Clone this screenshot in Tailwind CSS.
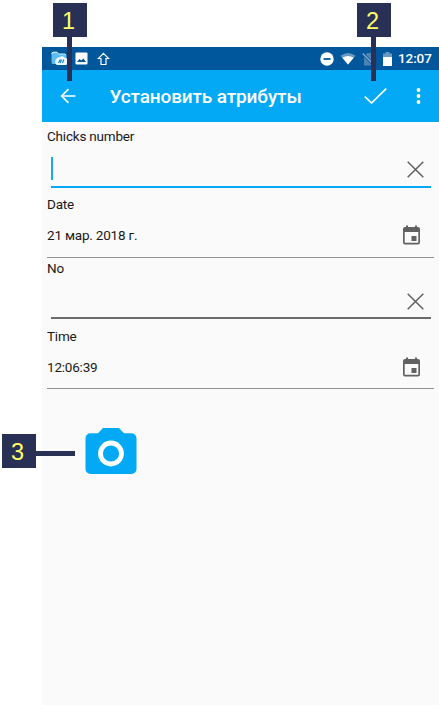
<!DOCTYPE html>
<html lang="ru">
<head>
<meta charset="utf-8">
<title>Установить атрибуты</title>
<script src="https://cdn.jsdelivr.net/npm/@tailwindcss/browser@4"></script>
</head>
<body class="relative h-[705px] w-[439px] overflow-hidden bg-white pt-[47px] pl-[42px] font-['Roboto',sans-serif]">
<div class="flex h-[658px] flex-col bg-[#fafafa]">
  <!-- Status bar -->
  <div class="flex h-[23px] items-center bg-[#01579b] pr-[7px] pl-[9px] text-white">
    <svg class="h-[15px] w-[17px]" viewBox="0 0 17 15"><path d="M2 1h4l1.500 2H14a1.500 1.500 0 0 1 1.500 1.500V13H2A1.500 1.500 0 0 1 .5 11.500v-9A1.500 1.500 0 0 1 2 1z" fill="#5ebcf5"/><path d="M1 3V2l1-.8h4L7.500 3H14l1 1" fill="none" stroke="#d8effc"/><path d="M6 14a3.500 3.500 0 0 1-1-5.500 3 3 0 0 1 3.500-2 3.500 3.500 0 0 1 5 0A4 4 0 0 1 15 14z" fill="#f0f8ff"/><path d="M7.500 12 9 9h1.300L9.300 12M11.500 12l1.300-3.500" fill="none" stroke="#1689d6" stroke-width="1.200"/></svg>
    <svg class="ml-[7px] h-[13px] w-[13px]" viewBox="0 0 13 13"><rect x=".5" y=".5" width="12" height="12" rx="1" fill="#fff"/><path d="M2 10l2.500-3 1.800 1.500 2.200-2L11 10z" fill="#01579b"/></svg>
    <svg class="ml-[9px] h-[14px] w-[13px]" viewBox="0 0 13 14"><path d="M6.500 1.300 11.700 6.500H9v6H4v-6H1.300z" fill="none" stroke="#fff" stroke-width="1.200"/></svg>
    <div class="ml-auto flex items-center">
      <svg class="h-[14px] w-[14px]" viewBox="0 0 14 14"><circle cx="7" cy="7" r="6.700" fill="#fff"/><path d="M3.500 7h7" stroke="#01579b" stroke-width="1.800"/></svg>
      <svg class="ml-[6px] h-[13px] w-[16px]" viewBox="0 0 17 13"><path d="M.5 3.500Q8.500-2 16.500 3.500L8.500 13z" fill="#6798c3"/><path d="M2.500 5.800Q8.500 2 14.500 5.800L8.500 13z" fill="#fff"/></svg>
      <svg class="ml-[6px] h-[14px] w-[13px]" viewBox="0 0 13 14"><path d="M5 1h7v10L4 3zM2 5l8.500 8.500H2z" fill="#4d82b2"/><path d="M.7 1.500 12 13" stroke="#8cb0d0" stroke-width="1.200"/></svg>
      <svg class="ml-[8px] h-[14px] w-[9px]" viewBox="0 0 9 14"><path d="M0 1.500h2.500V0h4v1.500H9V6H0z" fill="#6798c3"/><path d="M0 5h9v9H0z" fill="#fff"/></svg>
      <span class="ml-[6px] w-[34px] text-[13.500px] leading-[23px] font-medium tracking-[-0.1px] whitespace-nowrap">12:07</span>
    </div>
  </div>
  <!-- App bar -->
  <div class="flex h-[52px] items-center bg-[#03a9f4] text-white">
    <svg class="ml-[18px] h-4 w-4" viewBox="0 0 16 16" fill="none" stroke="#fff" stroke-width="1.700"><path d="M15.500 8H2M8.500 1.200 1.700 8l6.800 6.800"/></svg>
    <h1 class="ml-[33.500px] pt-[2px] text-[19px] font-medium tracking-[-0.13px] whitespace-nowrap">Установить атрибуты</h1>
    <svg class="mr-[29px] ml-auto h-4 w-[23px]" viewBox="0 0 23 16" fill="none" stroke="#fff" stroke-width="1.700"><path d="M.8 8.500 7.500 15 22.200.7"/></svg>
    <svg class="mr-[18px] h-4 w-[5px]" viewBox="0 0 5 16" fill="#fff"><circle cx="2.500" cy="2" r="1.900"/><circle cx="2.500" cy="8" r="1.900"/><circle cx="2.500" cy="14" r="1.900"/></svg>
  </div>
  <!-- Attribute fields -->
  <div class="h-[68px] pt-[5px] pl-[5px] text-[13.500px] leading-[18px] tracking-[-0.2px] text-[#191919]">
    <div>Chicks number</div>
    <div class="ml-[3.500px] flex h-[43px] w-[380px] items-center border-b-2 border-[#03a9f4]">
      <div class="mt-[6px] h-[23px] w-[2px] bg-[#1caaf0]"></div>
      <svg class="mt-[8px] mr-[6.500px] ml-auto h-[17px] w-[17px]" viewBox="0 0 17 17"><path d="M.7.7l15.600 15.600M16.300.7.7 16.300" stroke="#616161" stroke-width="1.500"/></svg>
    </div>
  </div>
  <div class="h-[68px] pt-[5px] pl-[5px] text-[13.500px] leading-[18px] tracking-[-0.2px] text-[#191919]">
    <div>Date</div>
    <div class="flex h-[45px] w-[387px] items-center border-b border-[#929292]">
      <span>21 мар. 2018 г.</span>
      <svg class="mr-[14px] ml-auto h-[20px] w-[17px]" viewBox="0 0 17 20"><path fill-rule="evenodd" d="M2 2h1V.5h2V2h7V.5h2V2h1a2 2 0 0 1 2 2v13.500a2 2 0 0 1-2 2H2a2 2 0 0 1-2-2V4a2 2 0 0 1 2-2zm-.3 5v10.800h13.600V7z" fill="#616161"/><path d="M8.500 11h5v5h-5z" fill="#616161"/></svg>
    </div>
  </div>
  <div class="h-[68px] pt-[1px] pl-[5px] text-[13.500px] leading-[18px] tracking-[-0.2px] text-[#191919]">
    <div>No</div>
    <div class="ml-[3.500px] flex h-[42px] w-[380px] items-center border-b-2 border-[#6b6b6b]">
      <svg class="mt-[8px] mr-[6.500px] ml-auto h-[17px] w-[17px]" viewBox="0 0 17 17"><path d="M.7.7l15.600 15.600M16.300.7.7 16.300" stroke="#616161" stroke-width="1.500"/></svg>
    </div>
  </div>
  <div class="h-[68px] pt-[1px] pl-[5px] text-[13.500px] leading-[18px] tracking-[-0.2px] text-[#191919]">
    <div>Time</div>
    <div class="flex h-[44px] w-[387px] items-center border-b border-[#929292]">
      <span>12:06:39</span>
      <svg class="mr-[14px] ml-auto h-[20px] w-[17px]" viewBox="0 0 17 20"><path fill-rule="evenodd" d="M2 2h1V.5h2V2h7V.5h2V2h1a2 2 0 0 1 2 2v13.500a2 2 0 0 1-2 2H2a2 2 0 0 1-2-2V4a2 2 0 0 1 2-2zm-.3 5v10.800h13.600V7z" fill="#616161"/><path d="M8.500 11h5v5h-5z" fill="#616161"/></svg>
    </div>
  </div>
  <!-- Photo button -->
  <svg class="mt-[34px] ml-[43px] h-[46px] w-[52px]" viewBox="0 0 52 46"><path d="M18 0h16l5 5.200h7.500a5 5 0 0 1 5 5V41a5 5 0 0 1-5 5h-41a5 5 0 0 1-5-5V10.200a5 5 0 0 1 5-5H13z" fill="#03a9f4"/><circle cx="26" cy="25.500" r="10.500" fill="none" stroke="#fff" stroke-width="4.800"/></svg>
</div>
<!-- Numbered callouts over the screen -->
<div class="absolute top-[3px] left-[53px] flex flex-col items-center font-['Liberation_Sans',sans-serif] text-[23.500px] text-[#ffff66]">
  <div class="flex h-[34px] w-[34px] items-center justify-center bg-[#293056] pt-[3px] pr-[3px]">1</div>
  <div class="mr-px h-[44px] w-[5px] bg-[#293056]"></div>
</div>
<div class="absolute top-[3px] left-[357px] flex flex-col items-center font-['Liberation_Sans',sans-serif] text-[23.500px] text-[#ffff66]">
  <div class="flex h-[34px] w-[34px] items-center justify-center bg-[#293056] pt-[3px] pr-[3px]">2</div>
  <div class="mr-px h-[44px] w-[5px] bg-[#293056]"></div>
</div>
<div class="absolute top-[434px] left-[2px] flex items-center font-['Liberation_Sans',sans-serif] text-[23.500px] text-[#ffff66]">
  <div class="flex h-[34px] w-[34px] items-center justify-center bg-[#293056] pt-[3px] pr-[3px]">3</div>
  <div class="mt-[5px] h-[5px] w-[39px] bg-[#293056]"></div>
</div>
</body>
</html>
